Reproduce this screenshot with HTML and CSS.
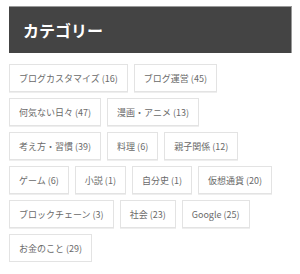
FILE: index.html
```html
<!DOCTYPE html>
<html lang="ja">
<head>
  <meta charset="UTF-8">
  <meta name="viewport" content="width=device-width, initial-scale=1.0">
  <title>カテゴリー</title>
  <link rel="stylesheet" href="styles.css">
</head>
<body>
  <div class="widget">
    <h2 class="widget-title">カテゴリー</h2>
    <ul class="tag-list">
      <li><a href="#">ブログカスタマイズ (16)</a></li>
      <li><a href="#">ブログ運営 (45)</a></li>
      <li><a href="#">何気ない日々 (47)</a></li>
      <li><a href="#">漫画・アニメ (13)</a></li>
      <li><a href="#">考え方・習慣 (39)</a></li>
      <li><a href="#">料理 (6)</a></li>
      <li><a href="#">親子関係 (12)</a></li>
      <li><a href="#">ゲーム (6)</a></li>
      <li><a href="#">小説 (1)</a></li>
      <li><a href="#">自分史 (1)</a></li>
      <li><a href="#">仮想通貨 (20)</a></li>
      <li><a href="#">ブロックチェーン (3)</a></li>
      <li><a href="#">社会 (23)</a></li>
      <li><a href="#">Google (25)</a></li>
      <li><a href="#">お金のこと (29)</a></li>
    </ul>
  </div>
</body>
</html>
```

FILE: styles.css
```css
body {
  margin: 0;
  padding: 6px 8px 0 9px;
  background-color: #fff;
  font-family: "Noto Sans CJK JP", "Open Sans", sans-serif;
}

.widget {
  width: 283px;
}

.widget-title {
  margin: 0;
  height: 47px;
  box-sizing: border-box;
  padding: 0 14px;
  display: flex;
  align-items: center;
  background-color: #444;
  border-top: 1px solid #999;
  border-right: 1px solid #999;
  color: #fff;
  font-size: 16px;
  font-weight: bold;
}

.tag-list {
  list-style: none;
  margin: 11px 0 0;
  padding: 0;
  display: flex;
  flex-wrap: wrap;
  gap: 6px 6px;
}

.tag-list a {
  display: flex;
  align-items: center;
  height: 28px;
  box-sizing: border-box;
  padding: 0 9px;
  border: 1px solid #e3e3e3;
  box-shadow: 0 1px 0 #eee;
  color: #6a6a6a;
  font-size: 9px;
  text-decoration: none;
}
```
